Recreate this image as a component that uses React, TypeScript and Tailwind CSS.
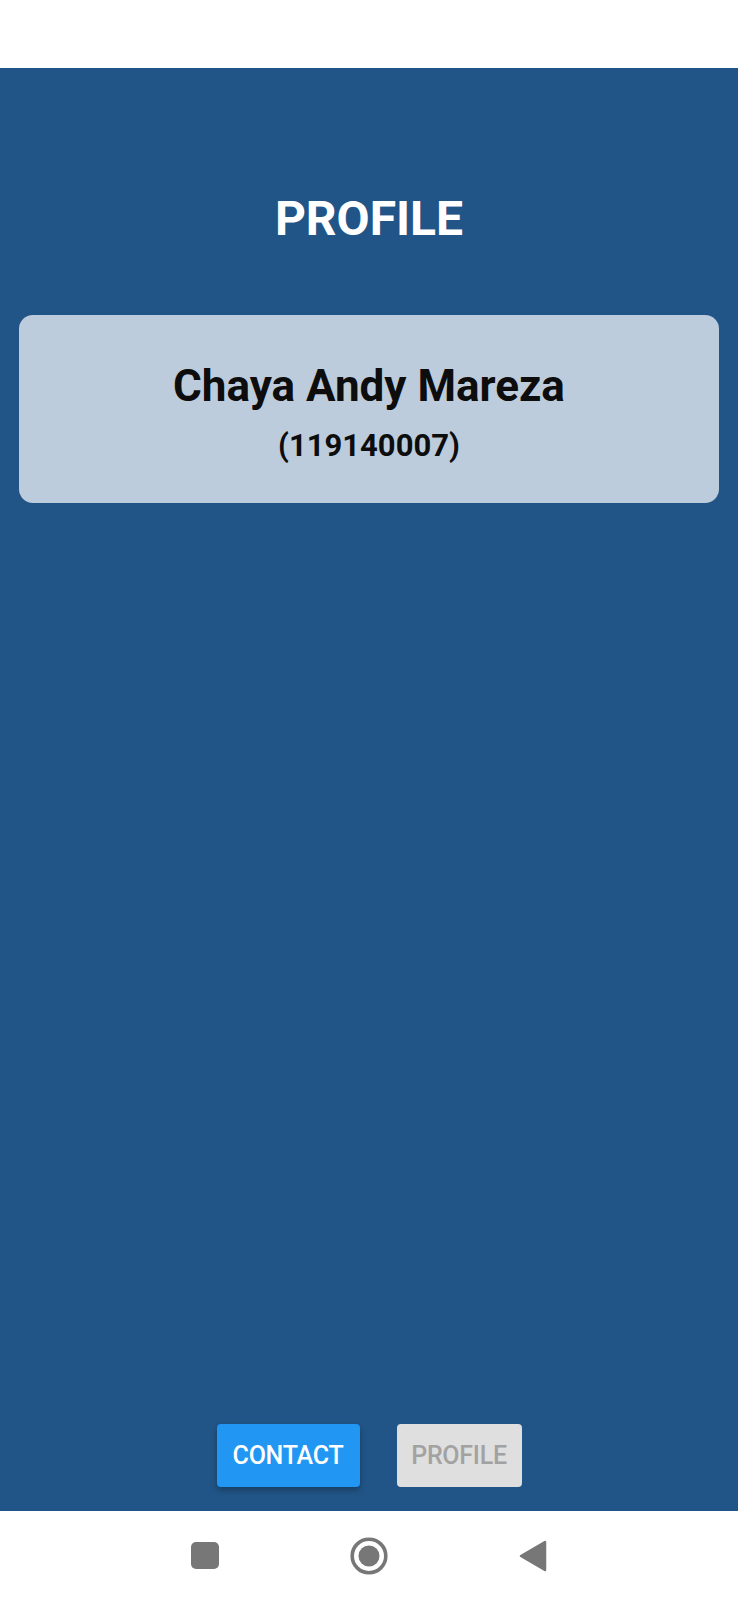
export default function App() {
  return (
    <div className="w-[738px] h-[1600px] flex flex-col bg-white" style={{ fontFamily: 'Roboto, "Liberation Sans", sans-serif' }}>
      <div className="h-[68px] bg-white shrink-0" />

      <main className="flex-1 flex flex-col bg-[#215587]">
        <h1 className="pt-[127px] text-center text-[48px] leading-none font-bold text-white">PROFILE</h1>

        <section className="mt-[72px] mx-[19px] h-[188px] rounded-[14px] bg-[#bdccdc] flex flex-col items-center pt-[49px]">
          <p className="text-[44px] leading-none font-bold text-[#0d0d0d]">Chaya Andy Mareza</p>
          <p className="mt-[22px] text-[31px] leading-none font-bold text-[#0d0d0d]">(119140007)</p>
        </section>

        <div className="flex-1" />

        <div className="flex justify-center gap-[37px] pb-[24px]">
          <button className="w-[143px] h-[63px] rounded-[4px] bg-[#2196f3] text-white text-[25px] font-medium tracking-[-0.01em] shadow-[0_3px_6px_rgba(0,0,0,0.3)]">
            CONTACT
          </button>
          <button className="w-[125px] h-[63px] rounded-[4px] bg-[#dfdfdf] text-[#a2a2a2] text-[25px] font-medium tracking-[-0.01em]">
            PROFILE
          </button>
        </div>
      </main>

      <nav className="h-[89px] shrink-0 bg-white flex items-center justify-center gap-[124px]">
        <div className="w-[40px] flex justify-center">
          <div className="w-[28px] h-[27px] rounded-[5px] bg-[#777777]" />
        </div>
        <div className="w-[40px] flex justify-center">
          <svg width="38" height="38" viewBox="0 0 38 38">
            <circle cx="19" cy="19" r="16.8" fill="none" stroke="#777777" strokeWidth="3.6" />
            <circle cx="19" cy="19" r="10.5" fill="#777777" />
          </svg>
        </div>
        <div className="w-[40px] flex justify-center">
          <svg width="28" height="32" viewBox="0 0 28 32">
            <polygon points="26,2 26,30 2,16" fill="#777777" stroke="#777777" strokeWidth="2.5" strokeLinejoin="round" />
          </svg>
        </div>
      </nav>
    </div>
  );
}
